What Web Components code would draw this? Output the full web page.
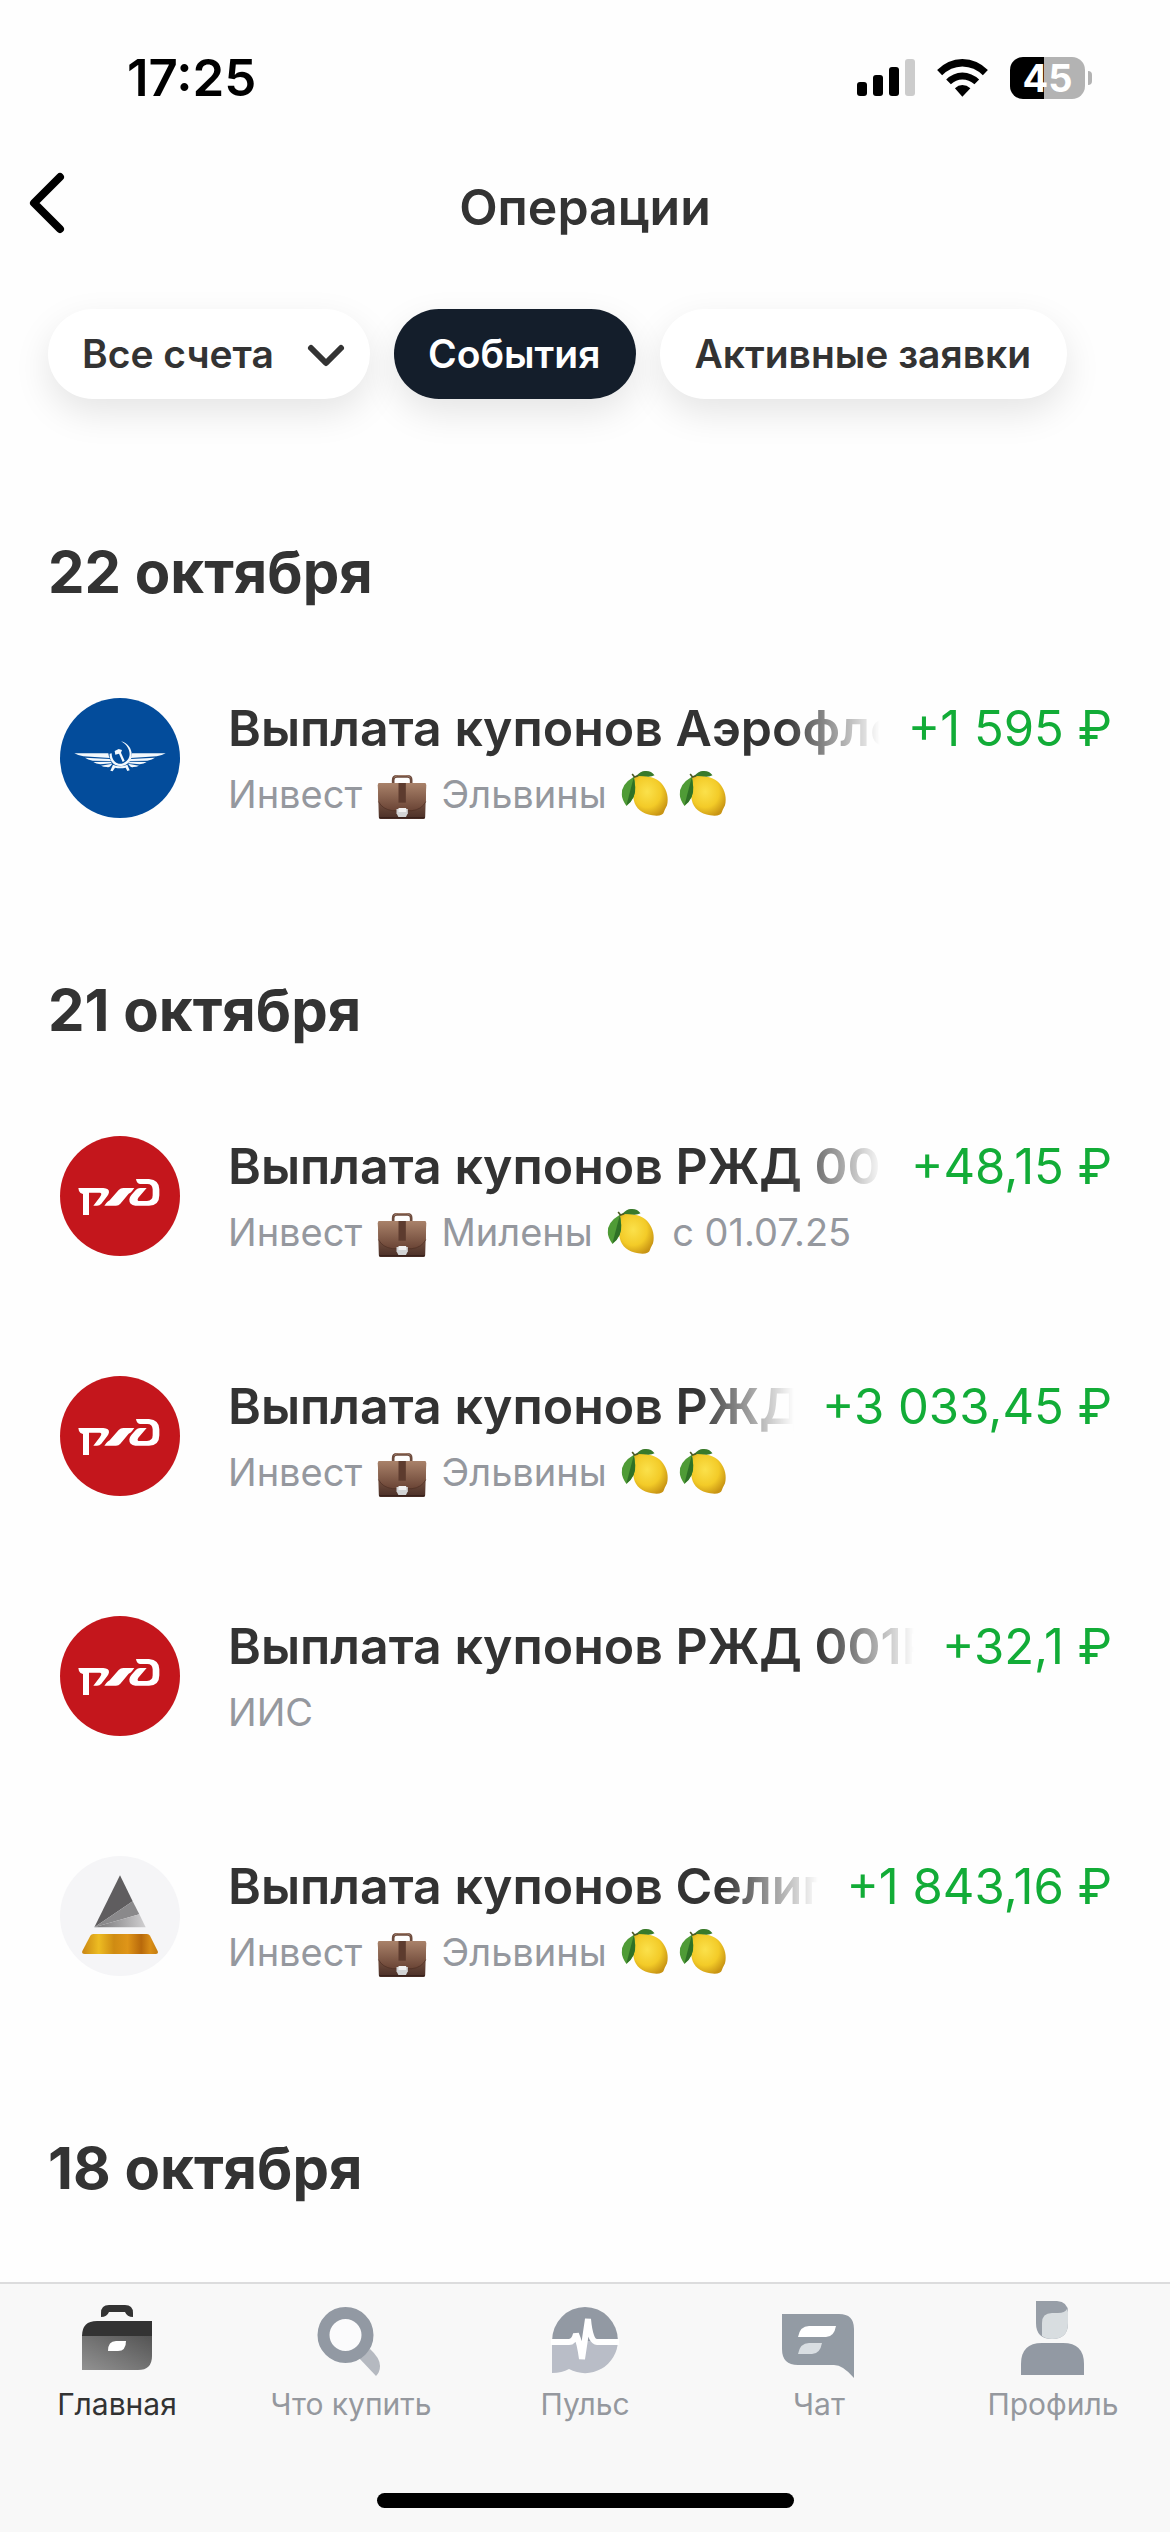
<!DOCTYPE html>
<html lang="ru">
<head>
<meta charset="utf-8">
<meta name="viewport" content="width=device-width, initial-scale=1">
<title>Операции</title>
<style>
    body {
        margin: 0;
        background: #fefefe;
        color: #333;
        font-family: Inter, "Liberation Sans", sans-serif;
    }
</style>
</head>
<body>
<app-screen>
    <status-bar slot="top" time="17:25" battery="45"></status-bar>
    <nav-header slot="top">Операции</nav-header>
    <filter-bar slot="top">
        <filter-select label="Счета" value="Все счета"></filter-select>
        <filter-chip active>События</filter-chip>
        <filter-chip>Активные заявки</filter-chip>
    </filter-bar>

    <operation-group>
        <span slot="date">22 октября</span>
        <operation-row logo="aeroflot" amount="+1 595 ₽">
            Выплата купонов Аэрофло
            <span slot="account">Инвест <ui-emoji name="briefcase"></ui-emoji> Эльвины <ui-emoji name="lemon"></ui-emoji><ui-emoji name="lemon"></ui-emoji></span>
        </operation-row>
    </operation-group>

    <operation-group>
        <span slot="date">21 октября</span>
        <operation-row logo="rzd" amount="+48,15 ₽">
            Выплата купонов РЖД 001
            <span slot="account">Инвест <ui-emoji name="briefcase"></ui-emoji> Милены <ui-emoji name="lemon"></ui-emoji> с 01.07.25</span>
        </operation-row>
        <operation-row logo="rzd" amount="+3 033,45 ₽">
            Выплата купонов РЖД
            <span slot="account">Инвест <ui-emoji name="briefcase"></ui-emoji> Эльвины <ui-emoji name="lemon"></ui-emoji><ui-emoji name="lemon"></ui-emoji></span>
        </operation-row>
        <operation-row logo="rzd" amount="+32,1 ₽">
            Выплата купонов РЖД 001P
            <span slot="account">ИИС</span>
        </operation-row>
        <operation-row logo="seligdar" amount="+1 843,16 ₽">
            Выплата купонов Селиг
            <span slot="account">Инвест <ui-emoji name="briefcase"></ui-emoji> Эльвины <ui-emoji name="lemon"></ui-emoji><ui-emoji name="lemon"></ui-emoji></span>
        </operation-row>
    </operation-group>

    <operation-group>
        <span slot="date">18 октября</span>
    </operation-group>

    <tab-bar slot="bottom">
        <tab-item icon="home" active>Главная</tab-item>
        <tab-item icon="search">Что купить</tab-item>
        <tab-item icon="pulse">Пульс</tab-item>
        <tab-item icon="chat">Чат</tab-item>
        <tab-item icon="profile">Профиль</tab-item>
    </tab-bar>
</app-screen>

<script>
const LOGOS = {
    aeroflot: `
        <svg viewBox="60 53 360 360" aria-hidden="true">
            <circle cx="240" cy="233" r="180" fill="#034c9b"/>
            <g fill="#f4f9fd">
                <path d="M103 219H205Q206 228 209 233L130 228Q113 225 103 219Z"/>
                <path d="M135 232L209 236Q211 240 214 242L158 241Q143 238 135 232Z"/>
                <path d="M160 245L212 244Q215 248 216 249L181 252Q168 250 160 245Z"/>
                <path d="M183 256L217 250L211 258Q206 262 201 260Q190 260 183 256Z"/>
                <path d="M377 219H276Q275 228 272 233L350 228Q367 225 377 219Z"/>
                <path d="M345 232L272 236Q270 240 267 242L322 241Q337 238 345 232Z"/>
                <path d="M320 245L269 244Q266 248 265 249L299 252Q312 250 320 245Z"/>
                <path d="M297 256L264 250L270 258Q275 262 280 260Q290 260 297 256Z"/>
                <path d="M243 183C283 193 288 249 246 257C222 260 207 241 209 220L215 219C215 240 228 253 245 250C279 241 275 200 243 183Z"/>
                <path d="M224 212L236 206L246 209L243 217L254 241L248 245L237 220L226 223Z"/>
                <path d="M219 253Q240 263 262 253L269 270L262 272L257 262Q240 266 225 262L218 273L211 271Z"/>
            </g>
        </svg>`,
    rzd: `
        <svg viewBox="60 48 360 360" aria-hidden="true">
            <circle cx="240" cy="228" r="180" fill="#c4161c"/>
            <g fill="#fff">
                <path d="M115 204H190Q208 205 207 217Q206 223 202 228L184 251Q179 257 171 257H160L180 231Q188 219 180 218H147V285H129V222Q121 222 117 213Z"/>
                <path d="M193 257L199 249Q203 244 209 241L236 210Q242 204 250 204H283L277 212Q273 218 266 221L241 251Q236 257 228 257Z"/>
                <path d="M288 177H327Q358 180 358 208V226Q358 257 327 257H286Q267 255 268 238Q269 231 274 225L288 209Q293 204 300 204H320L295 233Q289 243 299 243H321Q338 242 338 226V208Q337 192 322 192H300Q290 191 288 177Z"/>
            </g>
        </svg>`,
    seligdar: `
        <svg viewBox="60 48 360 360" aria-hidden="true">
            <defs>
                <linearGradient id="gold">
                    <stop offset="0" stop-color="#c98512"/>
                    <stop offset=".22" stop-color="#edbc22"/>
                    <stop offset=".42" stop-color="#cf8b12"/>
                    <stop offset=".6" stop-color="#df9518"/>
                    <stop offset=".78" stop-color="#b8690b"/>
                    <stop offset=".9" stop-color="#d98e17"/>
                    <stop offset="1" stop-color="#c47d10"/>
                </linearGradient>
                <linearGradient id="silver">
                    <stop offset="0" stop-color="#737274"/>
                    <stop offset="1" stop-color="#d0cfd1"/>
                </linearGradient>
            </defs>
            <circle cx="240" cy="228" r="180" fill="#f5f5f7"/>
            <path d="M240 106L278 184L163 262Z" fill="#5f5d5f"/>
            <path d="M278 184L298 223L163 262Z" fill="#8a898b"/>
            <path d="M298 223L317 262H163Z" fill="url(#silver)"/>
            <path d="M160 282H321Q327 282 330 287L353 333Q356 342 347 342H134Q124 342 127 333L151 287Q154 282 160 282Z" fill="url(#gold)"/>
        </svg>`,
}

const EMOJI = {
    briefcase: {
        label: "портфель",
        svg: `
        <svg viewBox="42 66 171 138">
            <defs>
                <linearGradient id="leather" x2="0" y2="1">
                    <stop offset="0" stop-color="#a37c65"/>
                    <stop offset=".5" stop-color="#765140"/>
                    <stop offset="1" stop-color="#4a2f27"/>
                </linearGradient>
                <linearGradient id="flap" x2="0" y2="1">
                    <stop offset="0" stop-color="#a9826a"/>
                    <stop offset="1" stop-color="#6a4435"/>
                </linearGradient>
            </defs>
            <path d="M101 101V90Q101 79 112 79H144Q155 79 155 90V101" fill="none" stroke="#6d4b3d" stroke-width="8"/>
            <path d="M104 83Q107 77 114 77H142Q149 77 152 83" fill="none" stroke="#a98775" stroke-width="3"/>
            <path d="M62 99H194Q200 99 200 105L197 202Q197 207 192 207H63Q58 207 58 202L55 105Q55 99 62 99Z" fill="url(#leather)"/>
            <path d="M60 99H196Q200 100 200 105L199 155Q186 179 157 182H99Q69 178 57 155L55 105Q55 99 60 99Z" fill="url(#flap)"/>
            <path d="M57 155Q69 178 99 182H157Q186 179 199 155" fill="none" stroke="#4b2d23" stroke-width="2"/>
            <path d="M117 99H139V158H117Z" fill="#5d3b2e"/>
            <path d="M111 177H145V190L139 202H117L111 190Z" fill="#d3d4d5"/>
            <path d="M117 174H140V186H117Z" fill="#f1f1f1"/>
            <path d="M59 203H196" stroke="#3a221c" stroke-width="4"/>
        </svg>`,
    },
    lemon: {
        label: "лимон",
        svg: `
        <svg viewBox="777 66 171 138">
            <defs>
                <radialGradient id="peel" cx=".42" cy=".4" r=".65">
                    <stop offset="0" stop-color="#fbe14b"/>
                    <stop offset=".6" stop-color="#f3cb28"/>
                    <stop offset="1" stop-color="#c99514"/>
                </radialGradient>
            </defs>
            <path d="M829 79C850 74 890 78 908 99C922 114 930 136 927 158C926 170 919 175 916 187C914 196 900 199 881 196C851 192 831 175 826 151C821 126 818 91 829 79Z" fill="url(#peel)"/>
            <path d="M832 79Q847 63 859 63Q878 61 888 76Q877 83 855 79Q843 77 832 79Z" fill="#397a2b"/>
            <path d="M826 80Q787 103 790 134Q790 148 804 168Q833 145 830 111Q830 91 826 80Z" fill="#4f9b36"/>
            <path d="M826 82Q817 115 804 166Q833 145 830 111Z" fill="#2f7126"/>
            <path d="M821 72L828 81L839 77" fill="none" stroke="#4c5a23" stroke-width="5"/>
        </svg>`,
    },
}

const TAB_ICONS = {
    home: `
        <svg viewBox="0 0 78 78" aria-hidden="true">
            <defs>
                <linearGradient id="bag" y1="1" x2="1" y2="0">
                    <stop offset="0" stop-color="#929292"/>
                    <stop offset="1" stop-color="#545454"/>
                </linearGradient>
            </defs>
            <path d="M23 17V13Q23 5 31 5H47Q55 5 55 13V17Q49 17 47 12H31Q29 17 23 17Z" fill="#333"/>
            <path d="M4 36Q4 21 19 21H74V36Z" fill="#333"/>
            <path d="M4 36H74V56Q74 70 60 70H4Z" fill="url(#bag)"/>
            <path d="M30 51Q30 41 38 41H48Q48 51 40 51Z" fill="#fff"/>
        </svg>`,
    search: `
        <svg viewBox="0 0 78 78" aria-hidden="true">
            <path d="M58 49Q68 58 68 66Q68 72 64 76L47 58Z" fill="#b5b9c0"/>
            <circle cx="33.5" cy="35" r="22" fill="#fbfbfc" stroke="#9299a3" stroke-width="12"/>
        </svg>`,
    pulse: `
        <svg viewBox="0 0 78 78" aria-hidden="true">
            <path d="M6 41A33 34 0 0 1 72 41Z" fill="#9299a3"/>
            <path d="M6 41H72A33 33 0 0 1 23 69Q16 73 6 73Z" fill="#b9bdc7"/>
            <path d="M5 42H23Q28 42 30 34Q34 43 36 59L42 19Q44 42 51 42H73" fill="none" stroke="#fff" stroke-width="6" stroke-linejoin="bevel"/>
        </svg>`,
    chat: `
        <svg viewBox="0 0 78 78" aria-hidden="true">
            <path d="M2 14H59Q74 14 74 29V78Q63 65 54 65H18Q2 65 2 49Z" fill="#939ba4"/>
            <path d="M18 37Q20 26 29 26H56Q54 37 46 37Z" fill="#fff"/>
            <path d="M18 54Q20 43 29 43H42Q40 54 32 54Z" fill="#d9dee2"/>
        </svg>`,
    profile: `
        <svg viewBox="0 0 78 78" aria-hidden="true">
            <path d="M22 1H43Q54 2 54 12V23Q54 39 38 39Q22 39 22 23Z" fill="#979ea7"/>
            <path d="M28 36V23Q28 13 38 13H44Q51 13 53 9L54 12V23Q54 39 38 39Q32 39 28 36Z" fill="#d8dde0"/>
            <path d="M7 75V64Q7 43 28 43H49Q70 43 70 64V75Z" fill="#9299a3"/>
        </svg>`,
}

class AppScreen extends HTMLElement {
    constructor() {
        super()
        this.attachShadow({ mode: "open" })
        this.shadowRoot.innerHTML = `
            <style>
                :host { display: flex; flex-direction: column; min-height: 100vh; }
                main { flex: 1; }
            </style>
            <header><slot name="top"></slot></header>
            <main><slot></slot></main>
            <slot name="bottom"></slot>
        `
    }
}

class StatusBar extends HTMLElement {
    connectedCallback() {
        if (!this.shadowRoot) this.attachShadow({ mode: "open" })
        const level = this.getAttribute("battery")

        this.shadowRoot.innerHTML = `
            <style>
                :host {
                    display: flex;
                    align-items: center;
                    justify-content: space-between;
                    height: 156px;
                    padding: 0 78px 0 127px;
                    color: #000;
                }
                time { font-size: 51px; font-weight: 600; line-height: 60px; }
                .icons { display: flex; align-items: center; gap: 22px; }
                svg { display: block; }
                .power { display: flex; align-items: center; gap: 3px; }
                .battery {
                    width: 75px;
                    border-radius: 13px;
                    background: linear-gradient(90deg, #000 ${level}%, #b3b3b3 ${level}%);
                    color: #fff;
                    font-size: 38px;
                    font-weight: 700;
                    line-height: 42px;
                    text-align: center;
                }
                .tip { width: 4px; height: 14px; border-radius: 0 4px 4px 0; background: #b3b3b3; }
            </style>
            <time>${this.getAttribute("time")}</time>
            <div class="icons">
                <svg width="58" height="38" viewBox="0 0 58 38" aria-hidden="true">
                    <rect y="23" width="10" height="14" rx="3"/>
                    <rect x="16" y="16" width="10" height="21" rx="3"/>
                    <rect x="32" y="8" width="10" height="29" rx="3"/>
                    <rect x="48" width="10" height="37" rx="3" fill="#ccc"/>
                </svg>
                <svg width="51" height="38" viewBox="349 86 151 113" aria-hidden="true">
                    <path d="M349 119Q380 87 424 86Q469 87 500 119L485 134Q460 109 424 108Q389 109 364 134Z"/>
                    <path d="M376 147Q396 127 424 126Q453 127 474 147L460 161Q444 147 424 147Q405 147 390 161Z"/>
                    <path d="M402 173Q412 163 424 163Q437 163 448 173L424 198Z"/>
                </svg>
                <div class="power">
                    <div class="battery">${level}</div>
                    <div class="tip"></div>
                </div>
            </div>
        `
    }
}

class NavHeader extends HTMLElement {
    constructor() {
        super()
        this.attachShadow({ mode: "open" })
        this.shadowRoot.innerHTML = `
            <style>
                :host {
                    display: grid;
                    grid-template-columns: 96px 1fr 96px;
                    align-items: center;
                    height: 102px;
                }
                button { padding: 0 0 8px 27px; border: 0; background: none; text-align: left; }
                svg { display: block; }
                h1 {
                    margin: 0;
                    font-size: 50px;
                    font-weight: 600;
                    line-height: 60px;
                    text-align: center;
                }
            </style>
            <button type="button" aria-label="Назад">
                <svg width="40" height="64" viewBox="0 0 40 64" aria-hidden="true">
                    <path d="M33 6L7 32L33 58" fill="none" stroke="#000" stroke-width="8" stroke-linecap="round" stroke-linejoin="round"/>
                </svg>
            </button>
            <h1><slot></slot></h1>
        `
    }
}

class FilterBar extends HTMLElement {
    constructor() {
        super()
        this.attachShadow({ mode: "open" })
        this.shadowRoot.innerHTML = `
            <style>
                :host { display: flex; gap: 24px; padding: 51px 48px 41px; }
            </style>
            <slot></slot>
        `
    }
}

const CHIP_STYLE = `
    :host { display: block; }
    button, select {
        display: block;
        height: 90px;
        padding: 0 36px 0 34px;
        border: 0;
        border-radius: 45px;
        background: #fff;
        box-shadow: 0 14px 36px rgba(0, 0, 0, .1);
        color: #333;
        font: 600 39px/48px Inter, "Liberation Sans", sans-serif;
        white-space: nowrap;
    }
`

class FilterChip extends HTMLElement {
    constructor() {
        super()
        this.attachShadow({ mode: "open" })
        this.shadowRoot.innerHTML = `
            <style>
                ${CHIP_STYLE}
                :host([active]) button { background: #141e2b; color: #fff; }
            </style>
            <button type="button" aria-pressed="${this.hasAttribute("active")}"><slot></slot></button>
        `
    }
}

class FilterSelect extends HTMLElement {
    connectedCallback() {
        if (!this.shadowRoot) this.attachShadow({ mode: "open" })

        this.shadowRoot.innerHTML = `
            <style>
                ${CHIP_STYLE}
                :host { position: relative; }
                select { appearance: none; padding-right: 96px; }
                svg { position: absolute; right: 24px; top: 34px; pointer-events: none; }
            </style>
            <select aria-label="${this.getAttribute("label")}">
                <option>${this.getAttribute("value")}</option>
            </select>
            <svg width="40" height="26" viewBox="0 0 40 26" aria-hidden="true">
                <path d="M5 5L20 20L35 5" fill="none" stroke="#333" stroke-width="6" stroke-linecap="round" stroke-linejoin="round"/>
            </svg>
        `
    }
}

class UiEmoji extends HTMLElement {
    connectedCallback() {
        if (!this.shadowRoot) this.attachShadow({ mode: "open" })
        const emoji = EMOJI[this.getAttribute("name")]
        this.setAttribute("role", "img")
        this.setAttribute("aria-label", emoji.label)

        this.shadowRoot.innerHTML = `
            <style>
                :host { display: inline-block; width: 58px; height: 46px; vertical-align: -10px; }
                svg { display: block; width: 100%; height: 100%; overflow: visible; }
            </style>
            ${emoji.svg}
        `
    }
}

class OperationGroup extends HTMLElement {
    constructor() {
        super()
        this.attachShadow({ mode: "open" })
        this.shadowRoot.innerHTML = `
            <style>
                :host { display: block; }
                h2 {
                    margin: 0;
                    padding: 96px 48px 30px;
                    font-size: 58px;
                    font-weight: 700;
                    line-height: 72px;
                }
            </style>
            <h2><slot name="date"></slot></h2>
            <slot></slot>
        `
    }
}

class OperationRow extends HTMLElement {
    connectedCallback() {
        if (!this.shadowRoot) this.attachShadow({ mode: "open" })

        this.shadowRoot.innerHTML = `
            <style>
                :host {
                    display: grid;
                    grid-template-columns: 120px minmax(0, 1fr);
                    align-items: center;
                    gap: 48px;
                    height: 240px;
                    padding: 0 58px 0 60px;
                }
                .logo svg { display: block; width: 120px; height: 120px; }
                .line { display: flex; align-items: baseline; gap: 28px; line-height: 60px; }
                .title {
                    flex: 1;
                    min-width: 0;
                    overflow: hidden;
                    font-size: 50px;
                    font-weight: 600;
                    white-space: nowrap;
                    mask-image: linear-gradient(to left, transparent, #000 96px);
                }
                .amount { color: #12ac37; font-size: 49px; white-space: nowrap; }
                .account { margin-top: 11px; color: #95989e; font-size: 38px; line-height: 48px; }
            </style>
            <div class="logo">${LOGOS[this.getAttribute("logo")]}</div>
            <div>
                <div class="line">
                    <div class="title"><slot></slot></div>
                    <div class="amount">${this.getAttribute("amount")}</div>
                </div>
                <div class="account"><slot name="account"></slot></div>
            </div>
        `
    }
}

class TabBar extends HTMLElement {
    constructor() {
        super()
        this.attachShadow({ mode: "open" })
        this.shadowRoot.innerHTML = `
            <style>
                :host {
                    display: block;
                    padding: 16px 0 24px;
                    border-top: 2px solid #dcdcdd;
                    background: #f8f8f8;
                }
                nav { display: flex; }
                .indicator {
                    width: 417px;
                    height: 15px;
                    margin: 71px auto 0;
                    border-radius: 8px;
                    background: #000;
                }
            </style>
            <nav><slot></slot></nav>
            <div class="indicator"></div>
        `
    }
}

class TabItem extends HTMLElement {
    connectedCallback() {
        if (!this.shadowRoot) this.attachShadow({ mode: "open" })

        this.shadowRoot.innerHTML = `
            <style>
                :host { display: block; flex: 1; }
                a {
                    display: flex;
                    flex-direction: column;
                    align-items: center;
                    gap: 8px;
                    color: #95989e;
                    font-size: 30px;
                    line-height: 36px;
                    text-decoration: none;
                }
                :host([active]) a { color: #333; }
                svg { display: block; width: 78px; height: 78px; }
            </style>
            <a href="#${this.getAttribute("icon")}">
                ${TAB_ICONS[this.getAttribute("icon")]}
                <span><slot></slot></span>
            </a>
        `
    }
}

customElements.define("app-screen", AppScreen)
customElements.define("status-bar", StatusBar)
customElements.define("nav-header", NavHeader)
customElements.define("filter-bar", FilterBar)
customElements.define("filter-chip", FilterChip)
customElements.define("filter-select", FilterSelect)
customElements.define("ui-emoji", UiEmoji)
customElements.define("operation-group", OperationGroup)
customElements.define("operation-row", OperationRow)
customElements.define("tab-bar", TabBar)
customElements.define("tab-item", TabItem)
</script>
</body>
</html>
